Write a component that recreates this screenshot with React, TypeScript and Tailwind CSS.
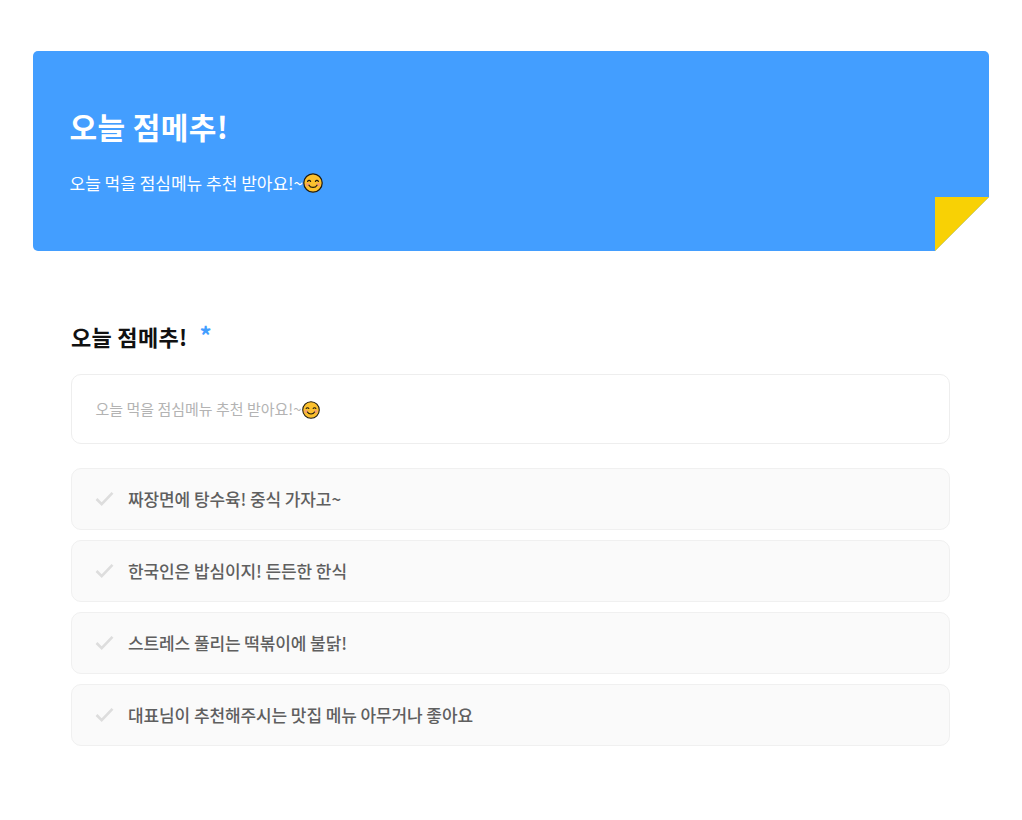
const options = [
  "짜장면에 탕수육! 중식 가자고~",
  "한국인은 밥심이지! 든든한 한식",
  "스트레스 풀리는 떡볶이에 불닭!",
  "대표님이 추천해주시는 맛집 메뉴 아무거나 좋아요",
];

function Smile({ className }: { className: string }) {
  return (
    <svg viewBox="0 0 20 20" className={className} aria-hidden="true">
      <circle cx="10" cy="10" r="9.2" fill="#fbc02d" stroke="#1f1a10" strokeWidth="1.2" />
      <circle cx="4.6" cy="11.6" r="1.9" fill="#f5a06a" />
      <circle cx="15.4" cy="11.6" r="1.9" fill="#f5a06a" />
      <path
        d="M4.6 8.4c.6-1.3 2.4-1.3 3 0M12.4 8.4c.6-1.3 2.4-1.3 3 0M6 12.2c1.6 3 6.4 3 8 0"
        fill="none"
        stroke="#1f1a10"
        strokeWidth="1.2"
        strokeLinecap="round"
      />
    </svg>
  );
}

export default function App() {
  return (
    <div className="min-h-[820px] bg-white pt-[51px] pl-[33px] pr-[33px] font-['Noto_Sans_CJK_KR','Noto_Sans',sans-serif]">
      {/* Header banner */}
      <header className="relative h-[200px] w-[956px] rounded-[5px] bg-[#439eff] pl-[36.5px] pt-[51px] text-white">
        <h1 className="text-[30px] font-bold leading-[48px] tracking-[0.4px]">오늘 점메추!</h1>
        <p className="mt-[20px] flex h-[26px] items-center text-[17px] leading-[26px]">
          오늘 먹을 점심메뉴 추천 받아요!~
          <Smile className="h-[20px] w-[20px]" />
        </p>
        {/* Folded corner */}
        <svg viewBox="0 0 54 54" className="absolute bottom-0 right-0 h-[54px] w-[54px]" aria-hidden="true">
          <polygon points="54,0 54,54 0,54" fill="#ffffff" />
          <polygon points="0,0 54,0 0,54" fill="#f8d105" />
        </svg>
      </header>

      <main className="w-[879px] pl-[38px] pt-[67px] box-content">
        <h2 className="flex h-[36px] items-center text-[22px] font-bold tracking-[0.3px] text-[#111111]">
          오늘 점메추!
          <span className="ml-[12px] -translate-y-px text-[24px] text-[#439eff]">*</span>
        </h2>

        <div className="mt-[20px] flex h-[70px] items-center rounded-[10px] border border-[#eeeeee] pl-[23.5px] pt-px text-[15px] text-[#b3b3b3]">
          오늘 먹을 점심메뉴 추천 받아요!~
          <Smile className="h-[18px] w-[18px]" />
        </div>

        <ul className="mt-[24px] flex flex-col gap-[10px]">
          {options.map((label) => (
            <li
              key={label}
              className="flex h-[62px] items-center rounded-[10px] border border-[#f0f0f0] bg-[#fafafa] pl-[23px] text-[17px] font-medium tracking-[-0.1px] text-[#5f5f5f]"
            >
              <svg viewBox="0 0 20 16" className="mr-[14px] mb-[2px] h-[15px] w-[19px] shrink-0" aria-hidden="true">
                <path d="M1.5 8.5 7 14 18.5 2" fill="none" stroke="#dddddd" strokeWidth="2.8" />
              </svg>
              {label}
            </li>
          ))}
        </ul>
      </main>
    </div>
  );
}
